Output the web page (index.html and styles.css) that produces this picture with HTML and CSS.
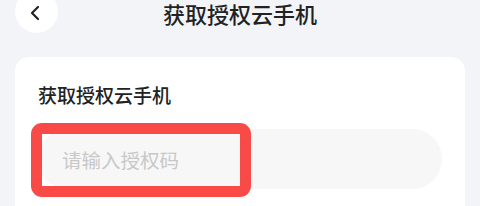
FILE: index.html
```html
<!DOCTYPE html>
<html lang="zh-CN">
<head>
    <meta charset="UTF-8">
    <meta name="viewport" content="width=device-width, initial-scale=1.0">
    <title>获取授权云手机</title>
    <link rel="stylesheet" href="styles.css">
</head>
<body>

    <div class="header">
        <button class="back" aria-label="返回">
            <svg width="12" height="16" viewBox="0 0 12 16">
                <path d="M9 2 L3 8 L9 14" fill="none" stroke="#222" stroke-width="2.2" stroke-linecap="round" stroke-linejoin="round"/>
            </svg>
        </button>
        <div class="title">获取授权云手机</div>
        <div></div>
    </div>

    <div class="card">
        <div class="label">获取授权云手机</div>
        <div class="field">
            <input type="text" class="code" placeholder="请输入授权码">
            <!-- 标注框 -->
            <div class="mark"></div>
        </div>
    </div>

</body>
</html>
```

FILE: styles.css
```css
* {
    margin: 0;
    padding: 0;
    box-sizing: border-box;
}

body {
    font-family: 'Noto Sans CJK SC', 'Noto Sans', sans-serif;
    background-color: #f3f4f8;
    width: 480px;
    height: 206px;
    overflow: hidden;
}

.header {
    display: grid;
    grid-template-columns: 1fr auto 1fr;
    align-items: start;
    height: 34px;
    padding-left: 15px;
}

.back {
    width: 43px;
    height: 43px;
    margin-top: -10px;
    border: none;
    border-radius: 50%;
    background: #ffffff;
    display: flex;
    align-items: center;
    justify-content: center;
    padding-right: 3px;
    padding-top: 2px;
}

.title {
    font-size: 22px;
    font-weight: 500;
    line-height: 24px;
    color: #222222;
    margin-top: 1px;
    margin-right: 15px;
}

.card {
    background: #ffffff;
    border-radius: 14px 14px 0 0;
    margin: 23px 15px 0;
    padding: 24px 23px 0;
    height: 149px;
}

.label {
    font-size: 19px;
    font-weight: 500;
    color: #222222;
    line-height: 28px;
}

.field {
    position: relative;
    margin-top: 20px;
}

.code {
    width: 100%;
    height: 60px;
    border: none;
    border-radius: 30px;
    background: #f7f7f7;
    font-family: inherit;
    font-size: 19.5px;
    padding-left: 24px;
    outline: none;
}

.code::placeholder {
    color: #c8c8c8;
}

.mark {
    position: absolute;
    left: -7px;
    top: -6px;
    width: 220px;
    height: 74px;
    border: 11px solid #f84b48;
    border-radius: 11px;
}
```
